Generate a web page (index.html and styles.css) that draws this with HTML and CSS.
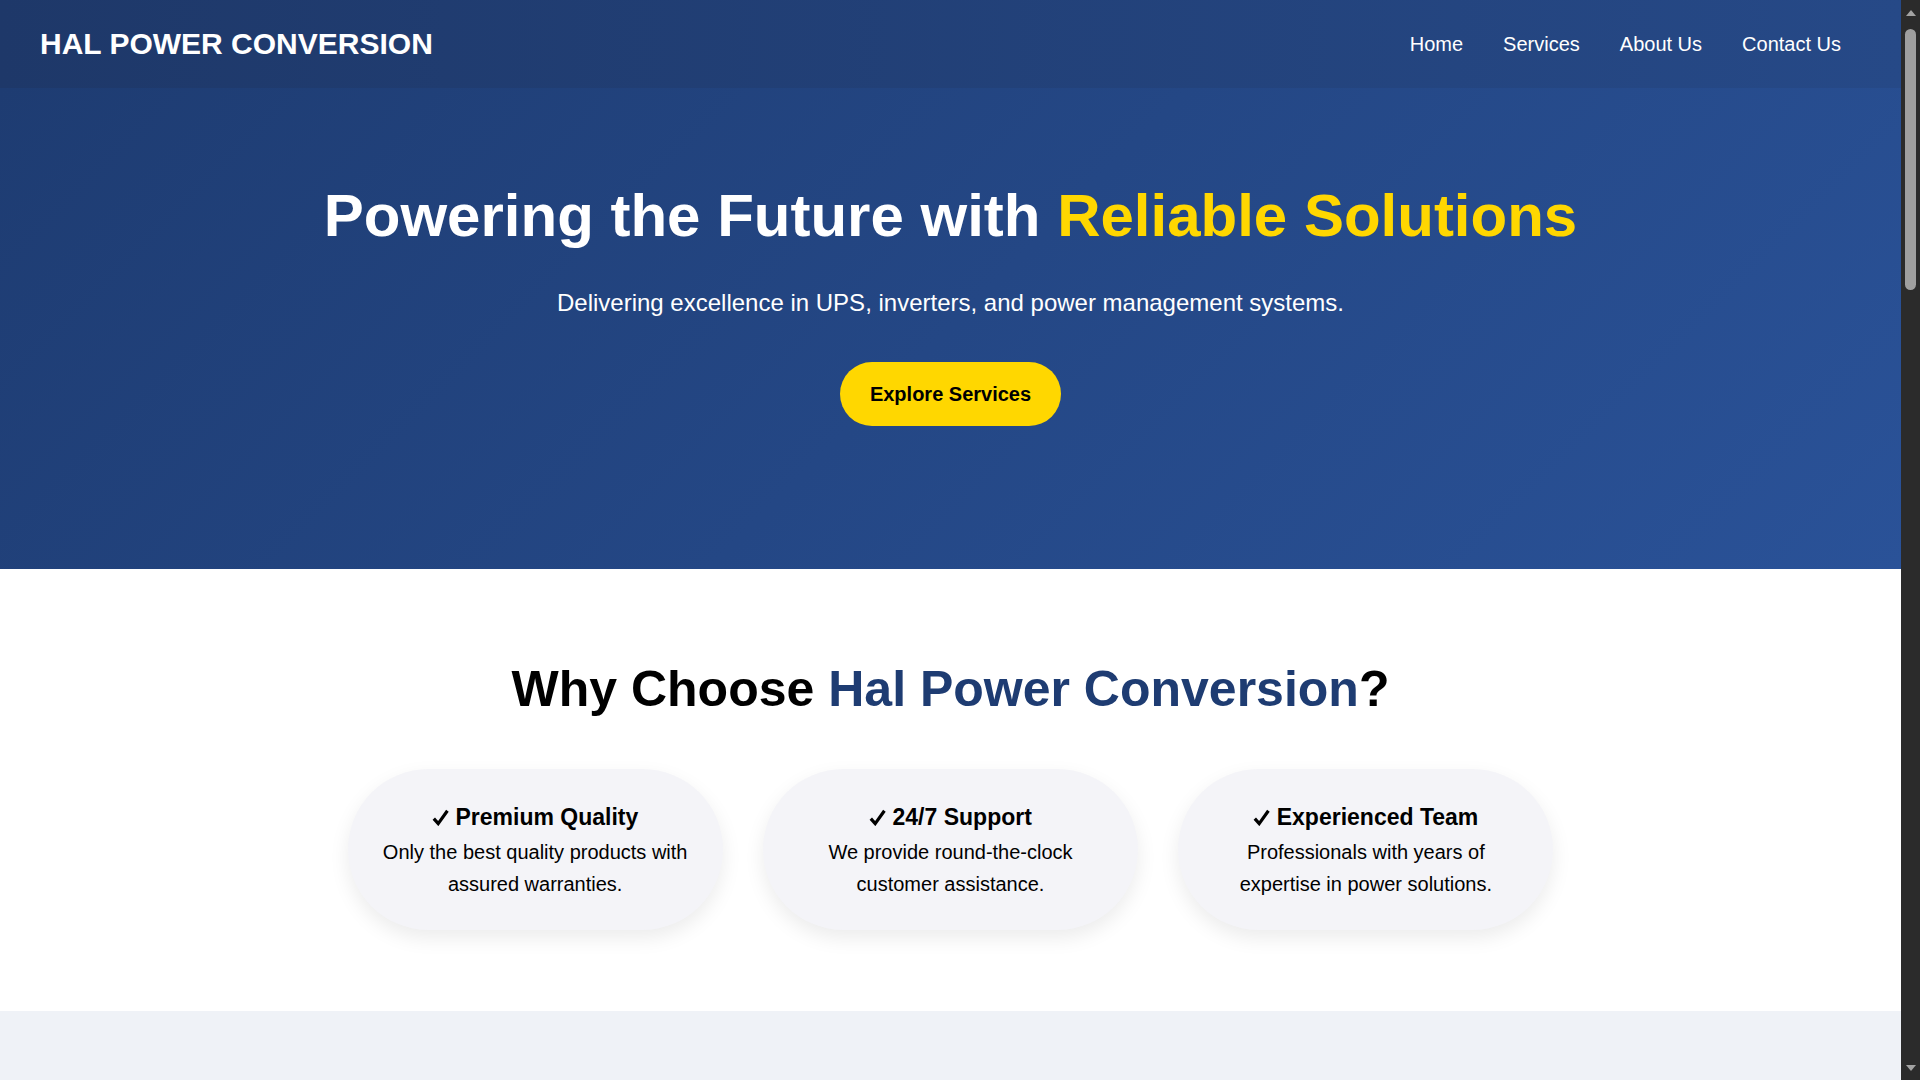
FILE: index.html
```html
<!DOCTYPE html>
<html lang="en">
<head>
<meta charset="utf-8">
<title>Hal Power Conversion</title>
<link rel="stylesheet" href="styles.css">
</head>
<body>
<div class="page">
  <header class="site-header">
    <div class="logo">HAL POWER CONVERSION</div>
    <nav class="nav">
      <a href="#" class="nav-link">Home</a>
      <a href="#" class="nav-link">Services</a>
      <a href="#" class="nav-link">About Us</a>
      <a href="#" class="nav-link">Contact Us</a>
    </nav>
  </header>
  <section class="hero">
    <h1 class="hero-title">Powering the Future with <span class="accent">Reliable Solutions</span></h1>
    <p class="hero-sub">Delivering excellence in UPS, inverters, and power management systems.</p>
    <a href="#" class="btn">Explore Services</a>
  </section>
  <section class="why">
    <h2 class="why-title">Why Choose <span class="brand">Hal Power Conversion</span>?</h2>
    <div class="cards">
      <div class="card">
        <h3 class="card-title"><svg class="check" viewBox="0 0 17 17" width="17" height="17" aria-hidden="true"><path d="M1.8 9.6 L6.2 14.6 L15.4 1.8" fill="none" stroke="#000" stroke-width="3.2" stroke-linejoin="miter"/></svg> Premium Quality</h3>
        <p class="card-text">Only the best quality products with assured warranties.</p>
      </div>
      <div class="card">
        <h3 class="card-title"><svg class="check" viewBox="0 0 17 17" width="17" height="17" aria-hidden="true"><path d="M1.8 9.6 L6.2 14.6 L15.4 1.8" fill="none" stroke="#000" stroke-width="3.2" stroke-linejoin="miter"/></svg> 24/7 Support</h3>
        <p class="card-text">We provide round-the-clock customer assistance.</p>
      </div>
      <div class="card">
        <h3 class="card-title"><svg class="check" viewBox="0 0 17 17" width="17" height="17" aria-hidden="true"><path d="M1.8 9.6 L6.2 14.6 L15.4 1.8" fill="none" stroke="#000" stroke-width="3.2" stroke-linejoin="miter"/></svg> Experienced Team</h3>
        <p class="card-text">Professionals with years of expertise in power solutions.</p>
      </div>
    </div>
  </section>
  <section class="more"></section>
</div>
<div class="scrollbar" aria-hidden="true">
  <span class="sb-arrow sb-up"></span>
  <span class="sb-thumb"></span>
  <span class="sb-fill"></span>
  <span class="sb-arrow sb-down"></span>
</div>
</body>
</html>
```

FILE: styles.css
```css
* {
  box-sizing: border-box;
}

body {
  margin: 0;
  font-family: "Liberation Sans", Arial, "DejaVu Sans", sans-serif;
  color: #000;
  background: #fff;
}

.page {
  margin-right: 19px;
}

.site-header {
  height: 88px;
  display: flex;
  align-items: center;
  justify-content: space-between;
  padding: 0 60px 0 40px;
  background: linear-gradient(90deg, #1e3869, #264987);
}

.logo {
  color: #fff;
  font-weight: bold;
  font-size: 30px;
}

.nav {
  display: flex;
  gap: 40px;
}

.nav-link {
  color: #fff;
  text-decoration: none;
  font-size: 20px;
}

.hero {
  background: linear-gradient(135deg, #1e3c72, #2a5298);
  text-align: center;
  padding: 93px 20px 143px;
  color: #fff;
}

.hero-title {
  margin: 0 0 39px;
  font-size: 60px;
  font-weight: bold;
}

.accent {
  color: #ffd700;
}

.hero-sub {
  margin: 0 0 45px;
  font-size: 24px;
}

.btn {
  display: inline-flex;
  align-items: center;
  height: 64px;
  padding: 0 30px;
  border-radius: 40px;
  background: #ffd700;
  color: #000;
  font-weight: bold;
  font-size: 20px;
  text-decoration: none;
}

.why {
  padding: 91px 20px 81px;
  text-align: center;
}

.why-title {
  margin: 0 0 51px;
  font-size: 50px;
  font-weight: bold;
}

.brand {
  color: #1e3c72;
}

.cards {
  display: flex;
  justify-content: center;
  gap: 40px;
  max-width: 1206px;
  margin: 0 auto;
}

.card {
  flex: 1;
  background: #f4f4f8;
  border-radius: 100px;
  padding: 35px 30px 30px;
  box-shadow: 0 8px 20px rgba(0, 0, 0, 0.08);
}

.card-title {
  margin: 0 0 5px;
  font-size: 23px;
  font-weight: bold;
}

.check {
  vertical-align: -1px;
}

.card-text {
  margin: 0;
  font-size: 20px;
  line-height: 32px;
}

.more {
  background: #eff2f7;
  min-height: 3320px;
}

/* imitation of the browser's classic scrollbar seen in the screenshot */
.scrollbar {
  position: fixed;
  top: 0;
  right: 0;
  width: 19px;
  height: 100vh;
  background: #2b2b2b;
  display: flex;
  flex-direction: column;
  align-items: center;
  padding: 10px 0 9px;
}

.sb-arrow {
  width: 0;
  height: 0;
  border-left: 5px solid transparent;
  border-right: 5px solid transparent;
}

.sb-up {
  border-bottom: 6px solid #a3a3a3;
}

.sb-down {
  border-top: 6px solid #a3a3a3;
}

.sb-thumb {
  margin-top: 13px;
  width: 11px;
  height: 261px;
  border-radius: 6px;
  background: #9f9f9f;
}

.sb-fill {
  flex: 1;
}
```
